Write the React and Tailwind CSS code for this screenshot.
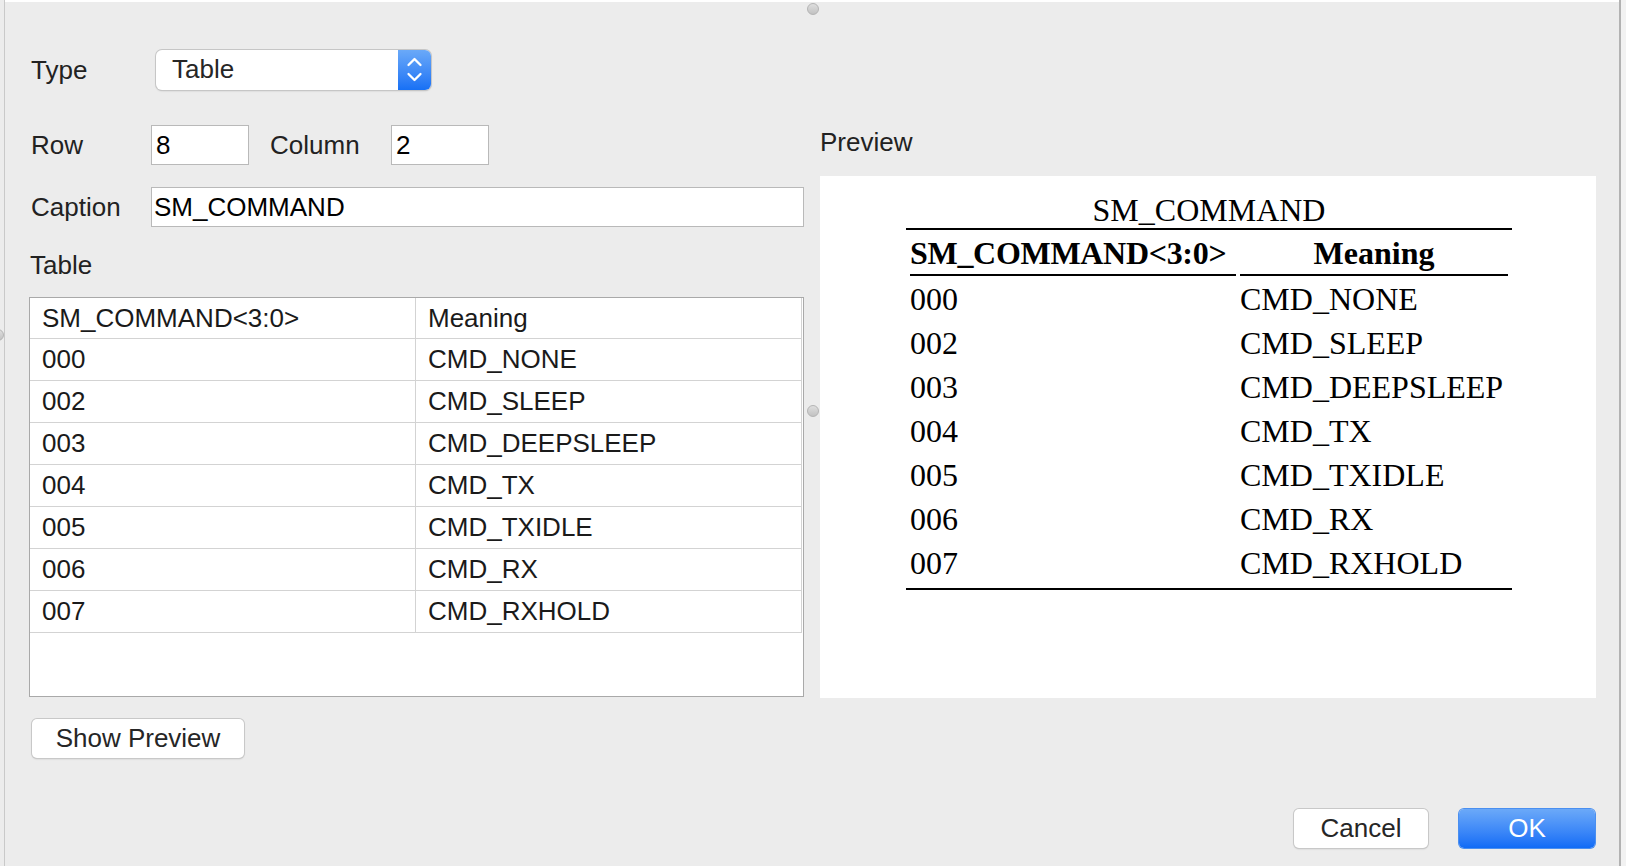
import React from "react";

const rows = [
  ["000", "CMD_NONE"],
  ["002", "CMD_SLEEP"],
  ["003", "CMD_DEEPSLEEP"],
  ["004", "CMD_TX"],
  ["005", "CMD_TXIDLE"],
  ["006", "CMD_RX"],
  ["007", "CMD_RXHOLD"],
];

const sans = { fontFamily: '"Liberation Sans", Arial, sans-serif' };
const serif = { fontFamily: '"Liberation Serif", "Times New Roman", serif' };

function Dot({ className }) {
  return (
    <div
      className={
        "absolute w-[12px] h-[12px] rounded-full border border-[#b4b4b4] bg-linear-to-b from-[#dedede] to-[#c2c2c2] " +
        className
      }
    />
  );
}

export default function App() {
  return (
    <div
      className="relative w-[1626px] h-[866px] overflow-hidden bg-[#ececec] text-[26px] text-[#222222] flex"
      style={sans}
    >
      {/* left strip */}
      <div className="w-[4px] h-full bg-[#ececec]" />
      <div className="w-[1px] h-full bg-[#c9c9c9]" />

      {/* main content */}
      <div className="flex-1 flex flex-col">
        <div className="h-[2px] bg-white" />
        <div className="flex flex-1">
          {/* left pane */}
          <div className="w-[807px] pl-[26px] pr-[8px] pt-[48px] flex flex-col">
            {/* Type */}
            <div className="flex items-center h-[40px]">
              <div className="w-[125px] leading-[30px]">Type</div>
              <div className="w-[275px] h-[40px] flex rounded-[6px] bg-white shadow-[0_0_0_1px_#c6c6c6,0_1px_2px_rgba(0,0,0,0.18)] overflow-hidden">
                <div className="flex-1 pl-[16px] leading-[38px] text-[#262626]">Table</div>
                <div className="w-[33px] h-full bg-linear-to-b from-[#6aa9f8] to-[#1670f5] flex items-center justify-center">
                  <svg width="33" height="40" viewBox="0 0 33 40">
                    <path d="M10.5 15 L16.5 9 L22.5 15" fill="none" stroke="white" strokeWidth="2.3" strokeLinecap="round" strokeLinejoin="round" />
                    <path d="M10.5 24 L16.5 30 L22.5 24" fill="none" stroke="white" strokeWidth="2.3" strokeLinecap="round" strokeLinejoin="round" />
                  </svg>
                </div>
              </div>
            </div>

            {/* Row / Column */}
            <div className="flex items-center h-[40px] mt-[35px]">
              <div className="w-[120px] leading-[30px]">Row</div>
              <div className="w-[98px] h-[40px] bg-white border border-[#b9b9b9] pl-[4px] leading-[38px] text-black">8</div>
              <div className="w-[121px] ml-[21px] leading-[30px]">Column</div>
              <div className="w-[98px] h-[40px] bg-white border border-[#b9b9b9] pl-[4px] leading-[38px] text-black">2</div>
            </div>

            {/* Caption */}
            <div className="flex items-center h-[40px] mt-[22px]">
              <div className="w-[120px] leading-[30px]">Caption</div>
              <div className="flex-1 h-[40px] bg-white border border-[#b9b9b9] pl-[2px] leading-[38px] text-black">SM_COMMAND</div>
            </div>

            <div className="mt-[23px] h-[30px] leading-[30px] ml-[-1px]">Table</div>

            {/* table */}
            <div className="mt-[17px] ml-[-2px] w-[775px] h-[400px] bg-white border border-[#a9a9a9] text-[#1a1a1a]">
              <div className="grid grid-cols-[386px_386px] h-[41px]">
                <div className="h-[41px] border-r border-b border-[#d3d3d3] pl-[12px] leading-[40px]">SM_COMMAND&lt;3:0&gt;</div>
                <div className="h-[41px] border-r border-b border-[#d3d3d3] pl-[12px] leading-[40px]">Meaning</div>
              </div>
              {rows.map(([a, b]) => (
                <div key={a} className="grid grid-cols-[386px_386px] h-[42px]">
                  <div className="h-[42px] border-r border-b border-[#d3d3d3] pl-[12px] leading-[41px]">{a}</div>
                  <div className="h-[42px] border-r border-b border-[#d3d3d3] pl-[12px] leading-[41px]">{b}</div>
                </div>
              ))}
            </div>

            <button className="mt-[22px] ml-[1px] w-[212px] h-[39px] rounded-[5px] bg-white shadow-[0_0_0_1px_#c8c8c8,0_1px_2px_rgba(0,0,0,0.2)] text-[#262626] leading-[37px] text-center">
              Show Preview
            </button>
          </div>

          {/* right pane */}
          <div className="flex-1 pl-[8px] pr-[23px] pt-[125px] flex flex-col">
            <div className="h-[30px] leading-[30px]">Preview</div>
            <div className="mt-[19px] h-[522px] bg-white pt-[16px] pl-[86px] text-black" style={serif}>
              <div className="w-[606px] text-[32px]">
                <div className="h-[36px] leading-[36px] text-center">SM_COMMAND</div>
                <div className="h-[2px] bg-black" />
                <div className="grid grid-cols-[330px_276px]">
                  <div className="pl-[4px]">
                    <div className="pt-[4px] h-[44px] leading-[38px] font-bold whitespace-nowrap tracking-[-0.3px]">SM_COMMAND&lt;3:0&gt;</div>
                    <div className="h-[1.5px] bg-black" />
                  </div>
                  <div className="pl-[4px] pr-[4px]">
                    <div className="pt-[4px] h-[44px] leading-[38px] font-bold text-center">Meaning</div>
                    <div className="h-[1.5px] bg-black" />
                  </div>
                </div>
                <div className="pt-[1px] pb-[3px]">
                  {rows.map(([a, b]) => (
                    <div key={a} className="grid grid-cols-[330px_276px] h-[44px] leading-[44px]">
                      <div className="pl-[4px]">{a}</div>
                      <div className="pl-[4px] whitespace-nowrap">{b}</div>
                    </div>
                  ))}
                </div>
                <div className="h-[2px] bg-black" />
              </div>
            </div>
            <div className="mt-[111px] flex justify-end gap-[31px] pr-[1px]">
              <button className="w-[134px] h-[39px] rounded-[5px] bg-white shadow-[0_0_0_1px_#c8c8c8,0_1px_2px_rgba(0,0,0,0.2)] text-[#262626] leading-[37px] text-center">
                Cancel
              </button>
              <button className="w-[136px] h-[39px] rounded-[5px] bg-linear-to-b from-[#6ba9f8] to-[#0f6bf6] shadow-[0_0_0_1px_#4a8ff0] text-white leading-[37px] text-center">
                OK
              </button>
            </div>
          </div>
        </div>
      </div>

      {/* right border */}
      <div className="w-[2px] h-full bg-[#b2b2b2]" />
      <div className="w-[5px] h-full bg-[#f2f2f2]" />

      {/* splitter handles */}
      <Dot className="left-[807px] top-[3px]" />
      <Dot className="left-[807px] top-[405px]" />
      <Dot className="left-[-8px] top-[329px]" />
    </div>
  );
}
